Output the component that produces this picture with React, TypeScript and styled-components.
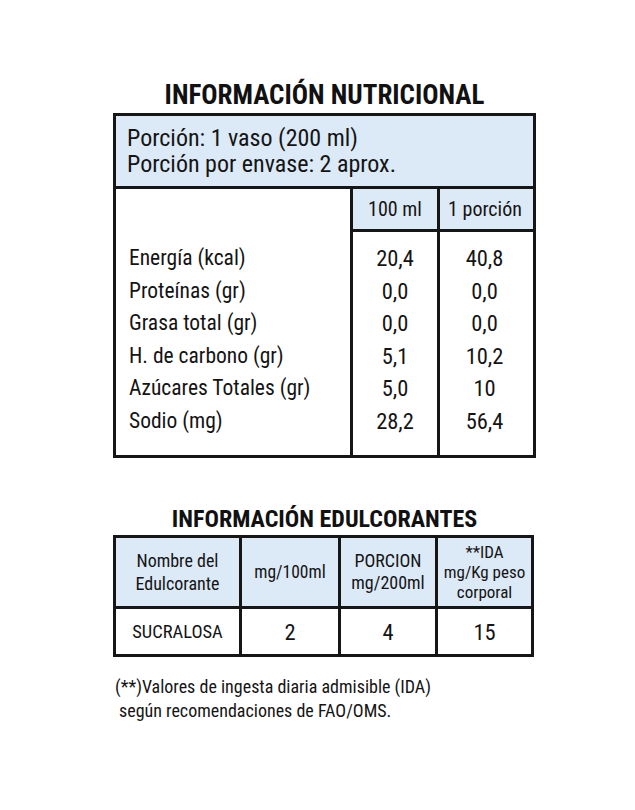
import React from 'react';
import styled, { createGlobalStyle } from 'styled-components';

const INK = '#161616';
const TINT = '#dce9f7';

const GlobalStyle = createGlobalStyle`
  html, body {
    margin: 0;
    padding: 0;
    background: #ffffff;
  }
  body {
    font-family: "Roboto Condensed", Lato, "Liberation Sans", sans-serif;
    color: #141414;
  }
`;

const Page = styled.div`
  width: 635px;
  min-height: 810px;
  box-sizing: border-box;
  padding: 80px 0 0 113px;
`;

const Title = styled.h1<{ $size: number; $lh: number; $top: number; $bottom: number }>`
  margin: ${({ $top, $bottom }) => `${$top}px 0 ${$bottom}px`};
  width: 423px;
  text-align: center;
  font-size: ${({ $size }) => $size}px;
  line-height: ${({ $lh }) => $lh}px;
  font-weight: 700;
  color: #111;
`;

const NutritionBox = styled.div`
  width: 423px;
  box-sizing: border-box;
  border: 3px solid ${INK};
`;

const Serving = styled.div`
  background: ${TINT};
  border-bottom: 3px solid ${INK};
  padding: 9px 11px;
  font-size: 24px;
  line-height: 26px;
`;

const Columns = styled.div`
  display: grid;
  grid-template-columns: 234px 87px 96px;
`;

const Column = styled.div<{ $divider?: boolean }>`
  display: flex;
  flex-direction: column;
  border-left: ${({ $divider }) => ($divider ? `3px solid ${INK}` : 'none')};
`;

const ColumnHead = styled.div<{ $filled?: boolean; $shift?: number }>`
  height: 40px;
  line-height: 40px;
  font-size: 20px;
  text-align: center;
  padding-right: ${({ $shift }) => $shift ?? 0}px;
  background: ${({ $filled }) => ($filled ? TINT : 'transparent')};
  border-bottom: 3px solid ${({ $filled }) => ($filled ? INK : 'transparent')};
`;

const ColumnBody = styled.div<{ $left?: boolean; $shift?: number }>`
  padding: 10px ${({ $shift }) => $shift ?? 0}px 18px ${({ $left }) => ($left ? 13 : 0)}px;
  text-align: ${({ $left }) => ($left ? 'left' : 'center')};
  font-size: ${({ $left }) => ($left ? 21.5 : 22.5)}px;
`;

const Line = styled.div`
  line-height: 32.5px;
  white-space: nowrap;
`;

const SweetenerGrid = styled.div`
  width: 421px;
  box-sizing: border-box;
  border: 3px solid ${INK};
  background: ${INK};
  display: grid;
  grid-template-columns: 123px 96px 94px 93px;
  grid-template-rows: 68px 45px;
  gap: 3px;
`;

const Cell = styled.div<{ $head?: boolean; $lh?: number; $size?: number }>`
  display: flex;
  flex-direction: column;
  align-items: center;
  justify-content: center;
  text-align: center;
  background: ${({ $head }) => ($head ? TINT : '#ffffff')};
  font-size: ${({ $size }) => $size ?? 17.5}px;
  line-height: ${({ $lh }) => $lh ?? 22}px;
  white-space: nowrap;
`;

const Footnote = styled.div`
  margin-top: 18px;
  padding-left: 2px;
  font-size: 18px;
  line-height: 23.5px;
`;

const NoteLine = styled.div<{ $indent?: number }>`
  padding-left: ${({ $indent }) => $indent ?? 0}px;
  white-space: nowrap;
`;

const nutrients = [
  ['Energía (kcal)', '20,4', '40,8'],
  ['Proteínas (gr)', '0,0', '0,0'],
  ['Grasa total (gr)', '0,0', '0,0'],
  ['H. de carbono (gr)', '5,1', '10,2'],
  ['Azúcares Totales (gr)', '5,0', '10'],
  ['Sodio (mg)', '28,2', '56,4'],
];

export default function App() {
  return (
    <>
      <GlobalStyle />
      <Page>
        <Title $size={27} $lh={30} $top={0} $bottom={3}>
          INFORMACIÓN NUTRICIONAL
        </Title>

        <NutritionBox>
          <Serving>
            <div>Porción: 1 vaso (200 ml)</div>
            <div>Porción por envase: 2 aprox.</div>
          </Serving>
          <Columns>
            <Column>
              <ColumnHead />
              <ColumnBody $left>
                {nutrients.map(([name]) => (
                  <Line key={name}>{name}</Line>
                ))}
              </ColumnBody>
            </Column>
            <Column $divider>
              <ColumnHead $filled>100 ml</ColumnHead>
              <ColumnBody>
                {nutrients.map(([name, per100]) => (
                  <Line key={name}>{per100}</Line>
                ))}
              </ColumnBody>
            </Column>
            <Column $divider>
              <ColumnHead $filled $shift={3}>1 porción</ColumnHead>
              <ColumnBody $shift={4}>
                {nutrients.map(([name, , perPortion]) => (
                  <Line key={name}>{perPortion}</Line>
                ))}
              </ColumnBody>
            </Column>
          </Columns>
        </NutritionBox>

        <Title $size={24} $lh={28} $top={46.5} $bottom={2.5}>
          INFORMACIÓN EDULCORANTES
        </Title>

        <SweetenerGrid>
          <Cell $head $lh={23} $size={18}>
            <span>Nombre del</span>
            <span>Edulcorante</span>
          </Cell>
          <Cell $head>mg/100ml</Cell>
          <Cell $head $size={18}>
            <span>PORCION</span>
            <span>mg/200ml</span>
          </Cell>
          <Cell $head $lh={20} $size={17}>
            <span>**IDA</span>
            <span>mg/Kg peso</span>
            <span>corporal</span>
          </Cell>
          <Cell $size={18.5}>SUCRALOSA</Cell>
          <Cell $size={22.5}>2</Cell>
          <Cell $size={22.5}>4</Cell>
          <Cell $size={22.5}>15</Cell>
        </SweetenerGrid>

        <Footnote>
          <NoteLine>(**)Valores de ingesta diaria admisible (IDA)</NoteLine>
          <NoteLine $indent={4}>según recomendaciones de FAO/OMS.</NoteLine>
        </Footnote>
      </Page>
    </>
  );
}
